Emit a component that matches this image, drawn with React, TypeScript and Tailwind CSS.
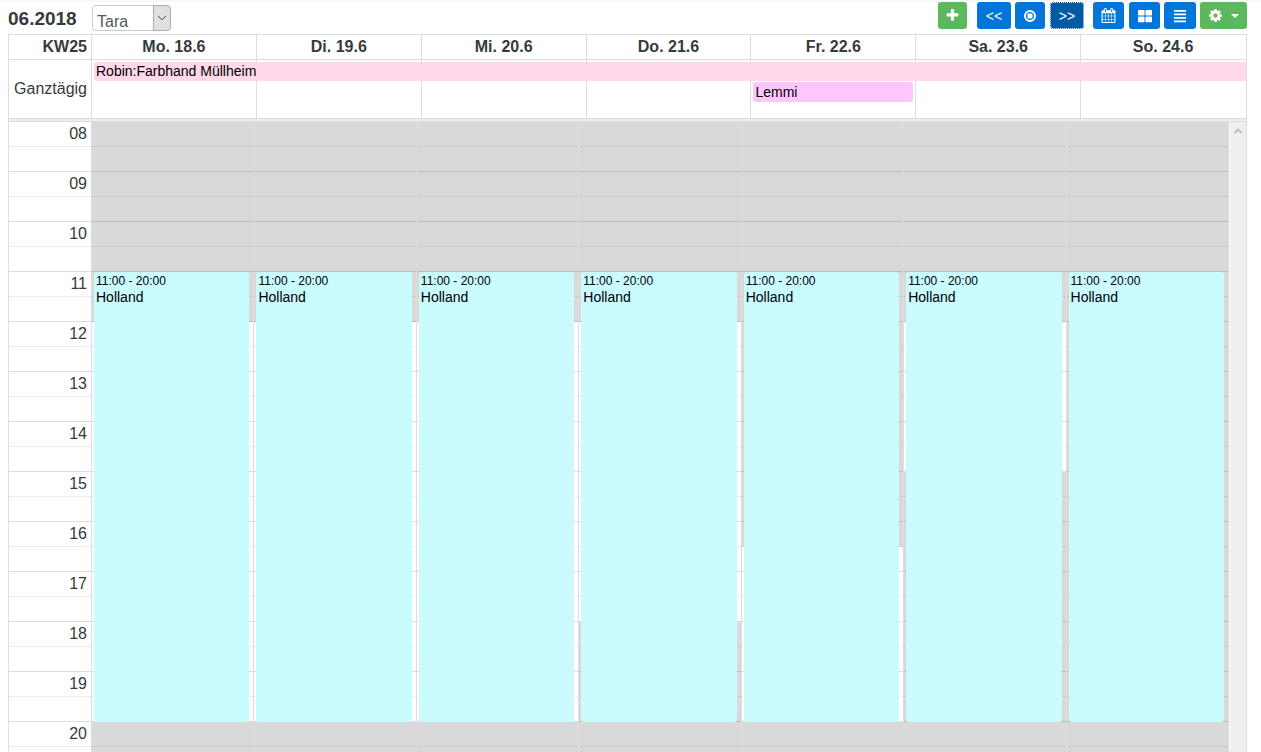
import { useState } from "react";
import { FaAlignJustify, FaThLarge } from "react-icons/fa";

type Day = { label: string; closed: [number, number][] };

const START = 8;
const HOUR_PX = 50;
const hours = Array.from({ length: 13 }, (_, i) => START + i);

// closed: hours outside of the opening times
const days: Day[] = [
    { label: "Mo. 18.6", closed: [[8, 12], [20, 21]] },
    { label: "Di. 19.6", closed: [[8, 12], [20, 21]] },
    { label: "Mi. 20.6", closed: [[8, 12], [20, 21]] },
    { label: "Do. 21.6", closed: [[8, 12], [18, 21]] },
    { label: "Fr. 22.6", closed: [[8, 16.5], [20, 21]] },
    { label: "Sa. 23.6", closed: [[8, 12], [15, 21]] },
    { label: "So. 24.6", closed: [[8, 21]] },
];

const blueBtn = "flex h-[27px] items-center justify-center rounded-[3px] bg-[#0275d8] text-white";
const greenBtn = "flex h-[27px] items-center justify-center rounded-[3px] bg-[#5cb85c] text-white";

function PlusIcon() {
    return (
        <svg width="15" height="15" viewBox="0 0 1792 1792" fill="currentColor">
            <path d="M1600 736v192q0 40-28 68t-68 28h-416v416q0 40-28 68t-68 28h-192q-40 0-68-28t-28-68v-416h-416q-40 0-68-28t-28-68v-192q0-40 28-68t68-28h416v-416q0-40 28-68t68-28h192q40 0 68 28t28 68v416h416q40 0 68 28t28 68z" />
        </svg>
    );
}

function CogIcon() {
    return (
        <svg width="15" height="15" viewBox="0 0 1792 1792" fill="currentColor">
            <path d="M1152 896q0-106-75-181t-181-75-181 75-75 181 75 181 181 75 181-75 75-181zm512-109v222q0 12-8 23t-20 13l-185 28q-19 54-39 91 35 50 107 138 10 12 10 25t-9 23q-27 37-99 108t-94 71q-12 0-26-9l-138-108q-44 23-91 38-16 136-29 186-7 28-36 28h-222q-14 0-24.5-8.5t-11.5-21.5l-28-184q-49-16-90-37l-141 107q-10 9-25 9-14 0-25-11-126-114-165-168-7-10-7-23 0-12 8-23 15-21 51-66.5t54-70.5q-27-50-41-99l-183-27q-13-2-21-12.5t-8-23.5v-222q0-12 8-23t19-13l186-28q14-46 39-92-40-57-107-138-10-12-10-24 0-10 9-23 26-36 98.5-107.5t94.5-71.5q13 0 26 10l138 107q44-23 91-38 16-136 29-186 7-28 36-28h222q14 0 24.5 8.5t11.5 21.5l28 184q49 16 90 37l142-107q9-9 24-9 13 0 25 10 129 119 165 170 7 8 7 22 0 12-8 23-15 21-51 66.5t-54 70.5q26 50 41 98l183 28q13 2 21 12.5t8 23.5z" />
        </svg>
    );
}

function StopCircleIcon() {
    return (
        <svg width="12" height="12" viewBox="0 0 12 12" fill="currentColor">
            <circle cx="6" cy="6" r="5" fill="none" stroke="currentColor" strokeWidth="2" />
            <rect x="3.5" y="3.5" width="5" height="5" rx="0.5" />
        </svg>
    );
}

function CalendarIcon() {
    return (
        <svg width="15" height="15" viewBox="0 0 1792 1792" fill="currentColor">
            <path d="M192 1664h288v-288h-288v288zm352 0h320v-288h-320v288zm-352-352h288v-320h-288v320zm352 0h320v-320h-320v320zm-352-384h288v-288h-288v288zm736 736h320v-288h-320v288zm-384-736h320v-288h-320v288zm768 736h288v-288h-288v288zm-384-352h320v-320h-320v320zm-352-864v-288q0-13-9.5-22.5t-22.5-9.5h-64q-13 0-22.5 9.5t-9.5 22.5v288q0 13 9.5 22.5t22.5 9.5h64q13 0 22.5-9.5t9.5-22.5zm736 864h288v-320h-288v320zm-384-384h320v-288h-320v288zm384 0h288v-288h-288v288zm32-480v-288q0-13-9.5-22.5t-22.5-9.5h-64q-13 0-22.5 9.5t-9.5 22.5v288q0 13 9.5 22.5t22.5 9.5h64q13 0 22.5-9.5t9.5-22.5zm384-64v1280q0 52-38 90t-90 38h-1408q-52 0-90-38t-38-90v-1280q0-52 38-90t90-38h128v-96q0-66 47-113t113-47h64q66 0 113 47t47 113v96h384v-96q0-66 47-113t113-47h64q66 0 113 47t47 113v96h128q52 0 90 38t38 90z" />
        </svg>
    );
}

function Toolbar() {
    const [person, setPerson] = useState("Tara");
    return (
        <header className="flex h-8 items-start justify-between">
            <div className="flex items-center">
                <h1 className="w-[84px] pt-1 text-[19px] leading-6 font-bold">06.2018</h1>
                <div className="relative mt-[3px]">
                    <select
                        aria-label="Person"
                        value={person}
                        onChange={(e) => setPerson(e.target.value)}
                        className="block h-[26px] w-[79px] appearance-none rounded border border-[#ccc] bg-white pt-1.5 pl-1 text-base leading-5 text-[#55595c]"
                    >
                        <option>Tara</option>
                        <option>Robin</option>
                    </select>
                    <span className="pointer-events-none absolute top-0 right-0 flex h-[26px] w-[18px] items-center justify-center rounded-r border border-[#adadad] bg-[#e1e1e1]">
                        <svg width="10" height="6" viewBox="0 0 10 6" fill="none" stroke="#444">
                            <path d="M1 0.8 5 4.8 9 0.8" />
                        </svg>
                    </span>
                </div>
            </div>
            <div className="flex text-sm">
                <button aria-label="Neu" className={`${greenBtn} mr-2.5 w-[29px]`}><PlusIcon /></button>
                <button className={`${blueBtn} mr-1 w-[34px]`}>&lt;&lt;</button>
                <button aria-label="Heute" className={`${blueBtn} mr-[5px] w-[30px]`}><StopCircleIcon /></button>
                <button className="mr-[9px] flex h-[27px] w-[34px] items-center justify-center rounded-[3px] border border-dotted border-white bg-[#025aa5] text-white">
                    &gt;&gt;
                </button>
                <button aria-label="Monat" className={`${blueBtn} mr-[5px] w-[31px]`}><CalendarIcon /></button>
                <button aria-label="Woche" className={`${blueBtn} mr-1 w-[31px]`}><FaThLarge size={14} /></button>
                <button aria-label="Liste" className={`${blueBtn} mr-1 w-8`}><FaAlignJustify size={14} /></button>
                <button aria-label="Einstellungen" className={`${greenBtn} w-[47px] gap-2`}>
                    <CogIcon />
                    <svg width="8" height="4" viewBox="0 0 8 4" fill="currentColor">
                        <path d="M0 0h8L4 4z" />
                    </svg>
                </button>
            </div>
        </header>
    );
}

function AllDay() {
    return (
        <div className="flex h-[59px] border-b border-[#ddd]">
            <div className="flex w-[82px] shrink-0 items-center justify-end pr-1">Ganztägig</div>
            <div className="relative flex-1">
                <div className="grid h-full grid-cols-7 pr-px">
                    {days.map((d) => <div key={d.label} className="border-l border-[#ddd]" />)}
                </div>
                <div className="absolute inset-0 grid auto-rows-[19px] grid-cols-7 gap-y-px pt-0.5 pr-px text-sm leading-[19px] text-black">
                    <div className="col-span-7 -mr-px ml-[3px] rounded-l-[3px] bg-[#ffd9ea] pl-0.5">Robin:Farbhand Müllheim</div>
                    <div className="col-start-5 mr-0.5 ml-[3px] h-5 rounded-[3px] bg-[#ffc6fc] pl-0.5 leading-5">Lemmi</div>
                </div>
            </div>
        </div>
    );
}

function DayColumn({ day }: { day: Day }) {
    return (
        <div className="relative border-l border-[#ddd]">
            {day.closed.map(([from, to]) => (
                <div
                    key={from}
                    className="absolute -right-px left-0 bg-black/15"
                    style={{ top: (from - START) * HOUR_PX, height: (to - from) * HOUR_PX }}
                />
            ))}
            <div
                className="absolute right-[4px] left-[2px] rounded-[3px] bg-[#c9fbff] pt-0.5 pl-0.5 text-black"
                style={{ top: (11 - START) * HOUR_PX, height: 9 * HOUR_PX }}
            >
                <div className="text-xs leading-[15px]">11:00 - 20:00</div>
                <div className="text-sm leading-[17px]">Holland</div>
            </div>
        </div>
    );
}

export default function App() {
    return (
        <div className="flex h-screen flex-col overflow-hidden border-t-2 border-[#f8f8f8] bg-white pr-[14px] pl-2 font-['Liberation_Sans',Arial,sans-serif] text-base text-[#373a3c]">
            <Toolbar />
            <main className="flex min-h-0 flex-1 flex-col border-x border-t border-[#ddd]">
                <div className="flex h-[25px] border-b border-[#ddd] leading-[23px] font-bold">
                    <div className="w-[82px] shrink-0 pr-1 text-right">KW25</div>
                    <div className="grid flex-1 grid-cols-7 pr-px text-center">
                        {days.map((d) => <div key={d.label} className="border-l border-[#ddd]">{d.label}</div>)}
                    </div>
                </div>
                <AllDay />
                <div className="h-0.5 shrink-0 bg-[#eee]" />
                <div className="flex min-h-0 flex-1 overflow-hidden">
                    <div className="relative h-[650px] flex-1">
                        {hours.map((h) => (
                            <div key={h} className="h-[50px] border-t border-[#ddd]">
                                <div className="h-[25px] w-[82px] border-b border-dotted border-[#ddd] pr-1 text-right leading-[23px]">
                                    {String(h).padStart(2, "0")}
                                </div>
                            </div>
                        ))}
                        <div className="absolute inset-y-0 top-px right-0 left-[82px]">
                            {hours.map((h) => (
                                <div key={h} className="h-[50px]">
                                    <div className="h-[25px] border-b border-dotted border-[#ddd]" />
                                </div>
                            ))}
                        </div>
                        <div className="absolute inset-y-0 top-px right-0 left-[82px] grid grid-cols-7 pr-px">
                            {days.map((d) => <DayColumn key={d.label} day={d} />)}
                        </div>
                    </div>
                    <div className="w-[17px] shrink-0 border-t border-l border-t-[#ddd] border-l-white bg-[#efefef]">
                        <div className="flex h-[18px] items-center justify-center">
                            <svg width="8" height="6" viewBox="0 0 8 6" fill="none" stroke="#bfbfbf" strokeWidth="2">
                                <path d="M0.5 5 4 1.5 7.5 5" />
                            </svg>
                        </div>
                    </div>
                </div>
            </main>
        </div>
    );
}
